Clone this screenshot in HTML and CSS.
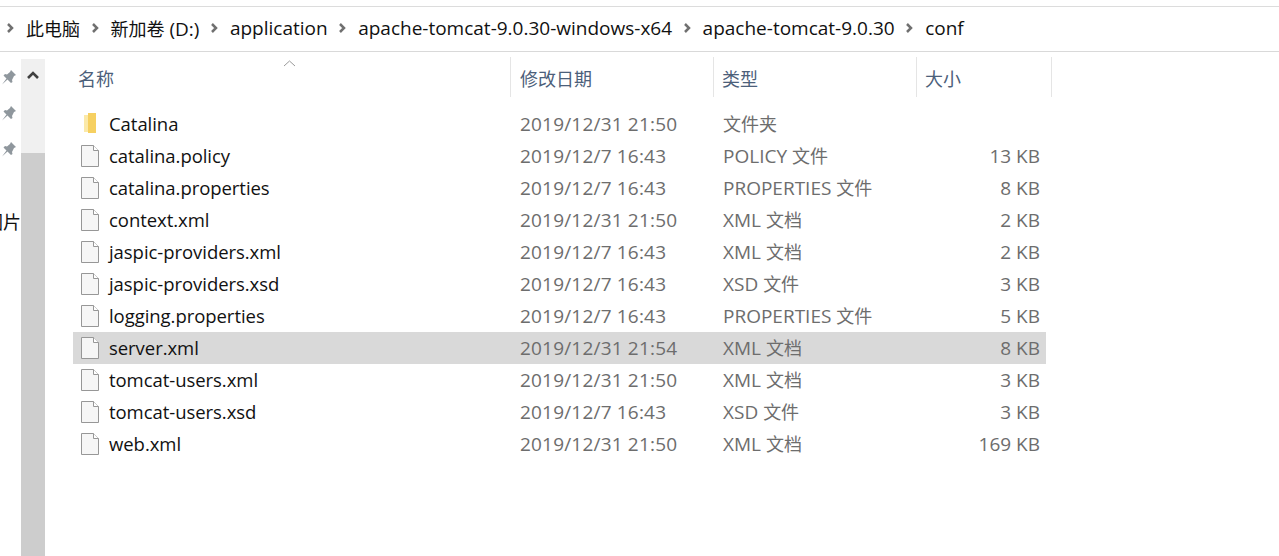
FILE: index.html
```html
<!doctype html>
<html lang="en">
<head>
    <meta charset="UTF-8" />
    <title>conf</title>
    <link rel="stylesheet" href="styles.css">
</head>
<body>

<div class="top-strip"></div>

<div class="crumbs">
    <svg class="chev" viewBox="0 0 8 10"><path d="M2 1l4 4-4 4"/></svg><span class="zh">此电脑</span>
    <svg class="chev" viewBox="0 0 8 10"><path d="M2 1l4 4-4 4"/></svg><span><span class="zh">新加卷</span> (D:)</span>
    <svg class="chev" viewBox="0 0 8 10"><path d="M2 1l4 4-4 4"/></svg><span>application</span>
    <svg class="chev" viewBox="0 0 8 10"><path d="M2 1l4 4-4 4"/></svg><span>apache-tomcat-9.0.30-windows-x64</span>
    <svg class="chev" viewBox="0 0 8 10"><path d="M2 1l4 4-4 4"/></svg><span>apache-tomcat-9.0.30</span>
    <svg class="chev" viewBox="0 0 8 10"><path d="M2 1l4 4-4 4"/></svg><span>conf</span>
</div>

<div class="main">
    <div class="nav">
        <svg class="pin" viewBox="0 0 16 16"><path d="M10 1l5 5-2 1-2 4 .5 2-1.500 1-3.500-3.500-5.500 5 4.500-6-3-3 1.500-1.500 2 .5 3-2.500z"/></svg>
        <svg class="pin" viewBox="0 0 16 16"><path d="M10 1l5 5-2 1-2 4 .5 2-1.500 1-3.500-3.500-5.500 5 4.500-6-3-3 1.500-1.500 2 .5 3-2.500z"/></svg>
        <svg class="pin" viewBox="0 0 16 16"><path d="M10 1l5 5-2 1-2 4 .5 2-1.500 1-3.500-3.500-5.500 5 4.500-6-3-3 1.500-1.500 2 .5 3-2.500z"/></svg>
        <div class="nav-label">图片</div>
    </div>

    <div class="scrollbar">
        <div class="scroll-track">
            <svg class="scroll-up" viewBox="0 0 12 8"><path d="M1 7l5-5 5 5"/></svg>
        </div>
        <div class="scroll-thumb"></div>
    </div>

    <div class="list">
        <div class="head">
            <div class="hcell hname">名称
                <svg class="sort" viewBox="0 0 13 7"><path d="M1 6l5.500-5 5.500 5"/></svg>
            </div>
            <div class="hcell">修改日期</div>
            <div class="hcell tight">类型</div>
            <div class="hcell tight">大小</div>
        </div>

        <div class="rows">
            <div class="row">
                <div class="name"><svg class="icon" viewBox="0 0 18 22"><path class="folder-back" d="M3 2h4v17H3z"/><path class="folder-front" d="M7 0h8v20H7z"/></svg>Catalina</div>
                <div class="cell date">2019/12/31 21:50</div><div class="cell"><span class="zh">文件夹</span></div><div class="size"></div>
            </div>
            <div class="row">
                <div class="name"><svg class="icon" viewBox="0 0 18 22"><path class="doc" d="M.5.500h12l5 5v16H.5z"/><path class="doc-fold" d="M12.500.500v5h5"/></svg>catalina.policy</div>
                <div class="cell date">2019/12/7 16:43</div><div class="cell">POLICY <span class="zh">文件</span></div><div class="size">13 KB</div>
            </div>
            <div class="row">
                <div class="name"><svg class="icon" viewBox="0 0 18 22"><path class="doc" d="M.5.500h12l5 5v16H.5z"/><path class="doc-fold" d="M12.500.500v5h5"/></svg>catalina.properties</div>
                <div class="cell date">2019/12/7 16:43</div><div class="cell">PROPERTIES <span class="zh">文件</span></div><div class="size">8 KB</div>
            </div>
            <div class="row">
                <div class="name"><svg class="icon" viewBox="0 0 18 22"><path class="doc" d="M.5.500h12l5 5v16H.5z"/><path class="doc-fold" d="M12.500.500v5h5"/></svg>context.xml</div>
                <div class="cell date">2019/12/31 21:50</div><div class="cell">XML <span class="zh">文档</span></div><div class="size">2 KB</div>
            </div>
            <div class="row">
                <div class="name"><svg class="icon" viewBox="0 0 18 22"><path class="doc" d="M.5.500h12l5 5v16H.5z"/><path class="doc-fold" d="M12.500.500v5h5"/></svg>jaspic-providers.xml</div>
                <div class="cell date">2019/12/7 16:43</div><div class="cell">XML <span class="zh">文档</span></div><div class="size">2 KB</div>
            </div>
            <div class="row">
                <div class="name"><svg class="icon" viewBox="0 0 18 22"><path class="doc" d="M.5.500h12l5 5v16H.5z"/><path class="doc-fold" d="M12.500.500v5h5"/></svg>jaspic-providers.xsd</div>
                <div class="cell date">2019/12/7 16:43</div><div class="cell">XSD <span class="zh">文件</span></div><div class="size">3 KB</div>
            </div>
            <div class="row">
                <div class="name"><svg class="icon" viewBox="0 0 18 22"><path class="doc" d="M.5.500h12l5 5v16H.5z"/><path class="doc-fold" d="M12.500.500v5h5"/></svg>logging.properties</div>
                <div class="cell date">2019/12/7 16:43</div><div class="cell">PROPERTIES <span class="zh">文件</span></div><div class="size">5 KB</div>
            </div>
            <div class="row selected">
                <div class="name"><svg class="icon" viewBox="0 0 18 22"><path class="doc" d="M.5.500h12l5 5v16H.5z"/><path class="doc-fold" d="M12.500.500v5h5"/></svg>server.xml</div>
                <div class="cell date">2019/12/31 21:54</div><div class="cell">XML <span class="zh">文档</span></div><div class="size">8 KB</div>
            </div>
            <div class="row">
                <div class="name"><svg class="icon" viewBox="0 0 18 22"><path class="doc" d="M.5.500h12l5 5v16H.5z"/><path class="doc-fold" d="M12.500.500v5h5"/></svg>tomcat-users.xml</div>
                <div class="cell date">2019/12/31 21:50</div><div class="cell">XML <span class="zh">文档</span></div><div class="size">3 KB</div>
            </div>
            <div class="row">
                <div class="name"><svg class="icon" viewBox="0 0 18 22"><path class="doc" d="M.5.500h12l5 5v16H.5z"/><path class="doc-fold" d="M12.500.500v5h5"/></svg>tomcat-users.xsd</div>
                <div class="cell date">2019/12/7 16:43</div><div class="cell">XSD <span class="zh">文件</span></div><div class="size">3 KB</div>
            </div>
            <div class="row">
                <div class="name"><svg class="icon" viewBox="0 0 18 22"><path class="doc" d="M.5.500h12l5 5v16H.5z"/><path class="doc-fold" d="M12.500.500v5h5"/></svg>web.xml</div>
                <div class="cell date">2019/12/31 21:50</div><div class="cell">XML <span class="zh">文档</span></div><div class="size">169 KB</div>
            </div>
        </div>
    </div>
</div>

</body>
</html>
```

FILE: styles.css
```css
html, body {
    margin: 0;
    height: 556px;
    overflow: hidden;
    background: #ffffff;
}
body {
    font-family: "Open Sans", "Noto Sans CJK SC", sans-serif;
    font-size: 19px;
    color: #111111;
}
.zh {
    font-size: 18px;
}

.top-strip {
    height: 6px;
    border-bottom: 1px solid #dcdcdc;
}

/* breadcrumb bar */
.crumbs {
    height: 42px;
    padding-bottom: 2px;
    border-bottom: 1px solid #d9d9d9;
    display: flex;
    align-items: center;
    padding-left: 6px;
    white-space: nowrap;
}
.chev {
    width: 8px;
    height: 10px;
    margin-right: 12px;
    margin-left: 10.5px;
    fill: none;
    stroke: #707070;
    stroke-width: 2.5;
}
.chev:first-child {
    margin-left: 0;
}

.main {
    display: flex;
    height: 504px;
}

/* left nav, cut off by the edge of the shot */
.nav {
    width: 21px;
    flex: none;
    overflow: hidden;
    display: flex;
    flex-direction: column;
    align-items: flex-end;
    padding-top: 17px;
}
.pin {
    width: 16px;
    height: 16px;
    margin-right: 4px;
    margin-bottom: 20px;
    fill: #8f979d;
}
.nav-label {
    margin-top: 32px;
    width: 21px;
    direction: rtl;
    white-space: nowrap;
    line-height: 26px;
    font-size: 18px;
}

.scrollbar {
    width: 24px;
    flex: none;
    margin-top: 7px;
    display: flex;
    flex-direction: column;
}
.scroll-track {
    height: 94px;
    background: #f0f0f0;
    text-align: center;
}
.scroll-up {
    width: 12px;
    height: 8px;
    margin-top: 11px;
    fill: none;
    stroke: #404040;
    stroke-width: 2.6;
}
.scroll-thumb {
    flex: 1;
    background: #cdcdcd;
}

/* file list */
.list {
    margin-left: 28px;
    width: 979px;
}
.head {
    display: grid;
    grid-template-columns: 438px 203px 203px 135px;
    height: 51px;
    padding-top: 5px;
}
.hcell {
    height: 40px;
    line-height: 45px;
    padding-left: 9px;
    color: #4c607a;
    border-right: 1px solid #e5e5e5;
    box-sizing: border-box;
    font-size: 18px;
}
.hcell.tight {
    padding-left: 8px;
}
.hname {
    padding-left: 5px;
    position: relative;
}
.sort {
    position: absolute;
    left: 210px;
    top: 3px;
    width: 13px;
    height: 7px;
    fill: none;
    stroke: #9a9a9a;
    stroke-width: 1;
}
.rows {
    width: 973px;
}
.row {
    display: grid;
    grid-template-columns: 437px 203px 203px 124px;
    height: 32px;
    line-height: 32px;
    color: #6d6d6d;
}
.row.selected {
    background: #d9d9d9;
}
.name {
    display: flex;
    align-items: center;
    color: #111111;
    padding-left: 8px;
    font-size: 18.5px;
    letter-spacing: -0.05px;
}
.icon {
    width: 18px;
    height: 22px;
    margin-right: 10px;
    flex: none;
}
.doc {
    fill: #f6f6f6;
    stroke: #979797;
}
.doc-fold {
    fill: #ffffff;
    stroke: #979797;
}
.folder-back {
    fill: #fbe9a8;
}
.folder-front {
    fill: #f6d061;
}
.cell {
    padding-left: 10px;
}
.date {
    letter-spacing: 0.19px;
}
.size {
    text-align: right;
}
```
